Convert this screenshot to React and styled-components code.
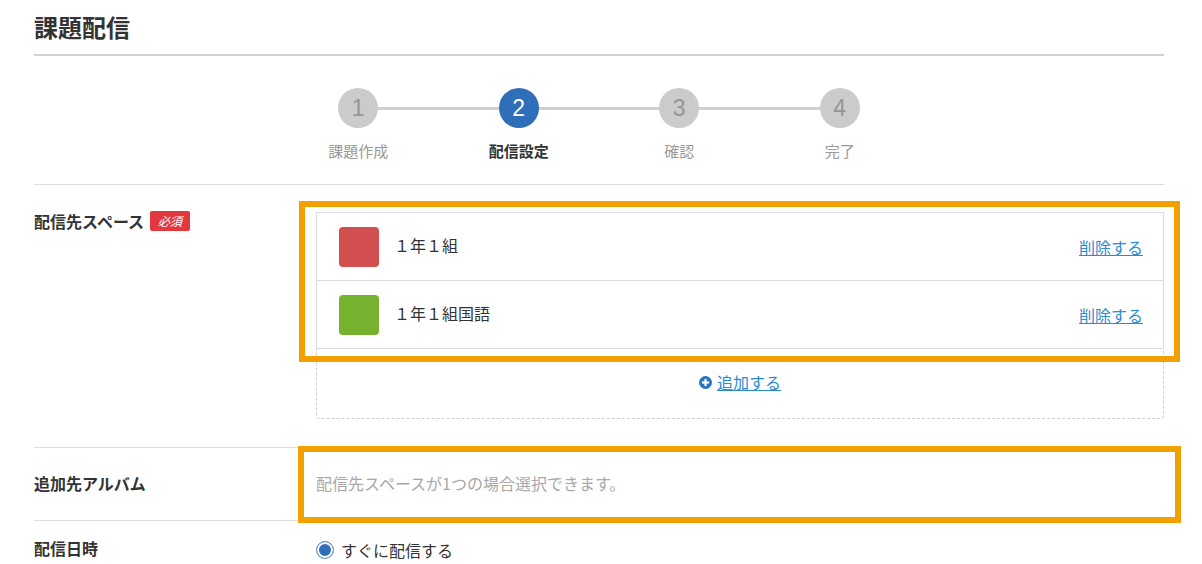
import React from "react";
import styled, { createGlobalStyle } from "styled-components";

const GlobalStyle = createGlobalStyle`
  body {
    margin: 0;
    background: #fff;
    color: #333;
    font-family: "Noto Sans CJK JP", "Noto Sans", sans-serif;
  }
`;

const steps = ["課題作成", "配信設定", "確認", "完了"];
const spaces = [
  { name: "１年１組", color: "#d24f4f" },
  { name: "１年１組国語", color: "#77b22f" },
];

const App = () => {
  return (
    <PAGE>
      <GlobalStyle />
      <TITLE>課題配信</TITLE>

      <STEPPER>
        {steps.map((s, i) => (
          <STEP key={s} last={i === steps.length - 1}>
            <CIRCLE active={i === 1}>{i + 1}</CIRCLE>
            <STEPLABEL active={i === 1}>{s}</STEPLABEL>
          </STEP>
        ))}
      </STEPPER>

      <ROW>
        <LABEL top>
          配信先スペース<BADGE>必須</BADGE>
        </LABEL>
        <CELL top>
          <DASHBOX>
            <LIST>
              {spaces.map((sp) => (
                <ITEM key={sp.name}>
                  <SWATCH color={sp.color} />
                  <ITEMNAME>{sp.name}</ITEMNAME>
                  <LINK>削除する</LINK>
                </ITEM>
              ))}
              <HIGHLIGHT top="-12px" left="-18px" right="-17px" bottom="-14px" />
            </LIST>
            <ADDROW>
              <PlusIcon />
              <LINK>追加する</LINK>
            </ADDROW>
          </DASHBOX>
        </CELL>
      </ROW>

      <ROW center>
        <LABEL>追加先アルバム</LABEL>
        <CELL>
          <PLACEHOLDER>配信先スペースが1つの場合選択できます。</PLACEHOLDER>
          <HIGHLIGHT top="-2px" left="-18px" right="-17px" bottom="-3px" />
        </CELL>
      </ROW>

      <ROW last>
        <LABEL>配信日時</LABEL>
        <CELL>
          <RADIOLINE>
            <RADIO />
            すぐに配信する
          </RADIOLINE>
        </CELL>
      </ROW>
    </PAGE>
  );
};

const PlusIcon = () => (
  <svg width="13" height="13" viewBox="0 0 14 14">
    <circle cx="7" cy="7" r="7" fill="#2577c2" />
    <rect x="3.2" y="5.8" width="7.6" height="2.4" fill="#fff" />
    <rect x="5.8" y="3.2" width="2.4" height="7.6" fill="#fff" />
  </svg>
);

const PAGE = styled.div`
  width: 1130px;
  padding: 0 38px 0 34px;
`;

const TITLE = styled.h1`
  margin: 0;
  padding-top: 10px;
  box-sizing: border-box;
  height: 56px;
  font-size: 24px;
  line-height: 34px;
  font-weight: 700;
  color: #333;
  border-bottom: 2px solid #d2d2d2;
`;

const STEPPER = styled.div`
  display: flex;
  justify-content: center;
  padding: 32px 0 21px;
  border-bottom: 1px solid #dcdcdc;
`;

const STEP = styled.div`
  position: relative;
  width: 160.5px;
  display: flex;
  flex-direction: column;
  align-items: center;

  &::after {
    content: "";
    display: ${(p) => (p.last ? "none" : "block")};
    position: absolute;
    top: 19px;
    left: 50%;
    width: 100%;
    height: 3px;
    background: #d0d0d0;
  }
`;

const CIRCLE = styled.div`
  position: relative;
  z-index: 1;
  width: 40px;
  height: 40px;
  border-radius: 50%;
  display: flex;
  align-items: center;
  justify-content: center;
  background: ${(p) => (p.active ? "#2f6eb9" : "#cbcbcb")};
  color: ${(p) => (p.active ? "#fff" : "#959595")};
  font-family: "Liberation Sans", Arial, sans-serif;
  font-size: 23px;
`;

const STEPLABEL = styled.div`
  margin-top: 11px;
  font-size: 15px;
  line-height: 24px;
  font-weight: ${(p) => (p.active ? 700 : 400)};
  color: ${(p) => (p.active ? "#333" : "#999")};
`;

const ROW = styled.div`
  display: grid;
  grid-template-columns: 282px 1fr;
  align-items: ${(p) => (p.center ? "center" : "start")};
  min-height: ${(p) => (p.center ? "72px" : "auto")};
  border-bottom: ${(p) => (p.last ? "none" : "1px solid #dcdcdc")};
  padding: ${(p) => (p.center ? "0" : p.last ? "18px 0 0" : "27px 0 28px")};
`;

const LABEL = styled.div`
  display: flex;
  align-items: center;
  font-size: 16px;
  line-height: 24px;
  font-weight: 700;
  color: #333;
  margin-top: ${(p) => (p.top ? "-3px" : "-3px")};
`;

const BADGE = styled.span`
  display: inline-block;
  margin-left: 6px;
  width: 40px;
  height: 20px;
  line-height: 20px;
  text-align: center;
  border-radius: 2px;
  background: #e3393e;
  color: #fff;
  font-size: 12px;
  font-weight: 400;
  font-style: italic;
`;

const CELL = styled.div`
  position: relative;
  min-height: ${(p) => (p.top ? "auto" : "24px")};
  display: flex;
  align-items: center;
  align-self: stretch;
`;

const DASHBOX = styled.div`
  flex: 1;
  border: 1px dashed #cfcfcf;
  border-radius: 4px;
`;

const LIST = styled.div`
  position: relative;
  margin: -1px -1px 0;
  border: 1px solid #dcdcdc;
  background: #fff;
`;

const ITEM = styled.div`
  display: flex;
  align-items: center;
  height: 67px;
  padding: 0 20px 0 22px;
  & + & {
    border-top: 1px solid #dcdcdc;
  }
`;

const SWATCH = styled.div`
  width: 40px;
  height: 40px;
  border-radius: 4px;
  background: ${(p) => p.color};
`;

const ITEMNAME = styled.div`
  flex: 1;
  margin-left: 15px;
  padding-bottom: 3px;
  font-size: 16px;
  color: #333;
`;

const LINK = styled.a`
  font-size: 16px;
  color: #2a8bd2;
  text-decoration: underline;
  cursor: pointer;
`;

const ADDROW = styled.div`
  height: 66px;
  padding-bottom: 3px;
  display: flex;
  align-items: center;
  justify-content: center;
  gap: 5px;
`;

const HIGHLIGHT = styled.div`
  position: absolute;
  top: ${(p) => p.top};
  left: ${(p) => p.left};
  right: ${(p) => p.right};
  bottom: ${(p) => p.bottom};
  border: 6px solid #f29f00;
  pointer-events: none;
`;

const PLACEHOLDER = styled.div`
  margin-top: -3px;
  font-size: 16px;
  color: #a8a8a8;
`;

const RADIOLINE = styled.label`
  display: flex;
  align-items: center;
  gap: 7px;
  margin-top: -2px;
  font-size: 16px;
  line-height: 24px;
  color: #333;
`;

const RADIO = styled.span`
  display: inline-block;
  width: 18px;
  height: 18px;
  box-sizing: border-box;
  border-radius: 50%;
  border: 1px solid #6b98cf;
  background: #2f6eb9;
  box-shadow: inset 0 0 0 2px #fff;
`;

export default App;
